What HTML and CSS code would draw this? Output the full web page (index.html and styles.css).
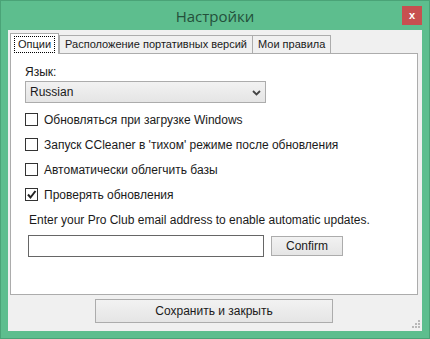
FILE: index.html
```html
<!DOCTYPE html>
<html lang="ru">
<head>
  <meta charset="UTF-8" />
  <title>Настройки</title>
  <link rel="stylesheet" href="styles.css">
</head>
<body>
  <div class="window">
    <div class="titlebar">
      <div class="title">Настройки</div>
      <button class="close" aria-label="Закрыть">x</button>
    </div>

    <div class="client">
      <div class="tabs">
        <div class="tab active"><span class="focus">Опции</span></div>
        <div class="tab">Расположение портативных версий</div>
        <div class="tab">Мои правила</div>
      </div>

      <div class="panel">
        <div class="label">Язык:</div>
        <div class="select">
          <span>Russian</span>
          <svg class="chevron" width="9" height="6" viewBox="0 0 9 6">
            <path d="M1 1 L4.5 4.5 L8 1" fill="none" stroke="#444" stroke-width="1.8" />
          </svg>
        </div>

        <div class="checks">
          <label class="check"><span class="box"></span>Обновляться при загрузке Windows</label>
          <label class="check"><span class="box"></span>Запуск CCleaner в 'тихом' режиме после обновления</label>
          <label class="check"><span class="box"></span>Автоматически облегчить базы</label>
          <label class="check">
            <span class="box">
              <svg width="11" height="11" viewBox="0 0 11 11">
                <path d="M2 5.5 L4.5 8.5 L9.5 2" fill="none" stroke="#222" stroke-width="2" />
              </svg>
            </span>Проверять обновления
          </label>
        </div>

        <div class="pro-text">Enter your Pro Club email address to enable automatic updates.</div>
        <div class="pro-row">
          <div class="input"></div>
          <button class="btn confirm">Confirm</button>
        </div>
      </div>

      <div class="footer">
        <button class="btn save">Сохранить и закрыть</button>
      </div>

      <svg class="grip" width="8" height="8" viewBox="0 0 8 8">
        <rect x="6" y="0" width="2" height="2" fill="#b8b8b8" />
        <rect x="3" y="3" width="2" height="2" fill="#b8b8b8" />
        <rect x="6" y="3" width="2" height="2" fill="#b8b8b8" />
        <rect x="0" y="6" width="2" height="2" fill="#b8b8b8" />
        <rect x="3" y="6" width="2" height="2" fill="#b8b8b8" />
        <rect x="6" y="6" width="2" height="2" fill="#b8b8b8" />
      </svg>
    </div>
  </div>
</body>
</html>
```

FILE: styles.css
```css
* {
  box-sizing: border-box;
}
body {
  margin: 0;
  font-family: "Liberation Sans", Arial, sans-serif;
  font-size: 12px;
  color: #1a1a1a;
}

/* окно */
.window {
  width: 430px;
  height: 339px;
  background: #5dbe8e;
  border: 1px solid #4aa377;
  padding: 0 7px 7px 7px;
  display: flex;
  flex-direction: column;
}

.titlebar {
  height: 29px;
  position: relative;
  display: flex;
  justify-content: center;
  align-items: center;
}
.title {
  font-family: "Open Sans", sans-serif;
  font-size: 15px;
  color: #24503b;
  margin-top: 1px;
}
.close {
  position: absolute;
  right: 0;
  top: 5px;
  width: 20px;
  height: 19px;
  border: none;
  background: #c75050;
  color: #fff;
  font: bold 11px "Liberation Sans", sans-serif;
  padding: 0 0 2px 0;
}

/* клиентская область */
.client {
  position: relative;
  flex: 1;
  background: #f0f0f0;
  padding: 3px 4px 0 2px;
  display: flex;
  flex-direction: column;
}

.tabs {
  display: flex;
  align-items: flex-end;
  height: 20px;
  font-size: 11px;
}
.tab {
  height: 18px;
  padding: 0 5px;
  border: 1px solid #acacac;
  border-bottom: none;
  background: #f0f0f0;
  line-height: 17px;
  white-space: nowrap;
  margin-left: -1px;
}
.tab:first-child {
  margin-left: 0;
}
.tab.active {
  height: 21px;
  margin-bottom: -1px;
  background: #fff;
  position: relative;
  z-index: 1;
  padding: 2px 3px 0 3px;
  line-height: 15px;
}
.tab.active + .tab {
  margin-left: 0;
}
.focus {
  display: inline-block;
  border: 1px dotted #000;
  padding: 0 3px;
}

.panel {
  height: 242px;
  background: #fff;
  border: 1px solid #acacac;
  padding: 10px 14px 0 14px;
}
.label {
  height: 16px;
  line-height: 16px;
}
.select {
  margin-top: 1px;
  width: 241px;
  height: 22px;
  border: 1px solid #acacac;
  background: linear-gradient(#f2f2f2, #e5e5e5);
  display: flex;
  align-items: center;
  justify-content: space-between;
  padding: 0 4px 0 4px;
}
.chevron {
  margin-top: 1px;
}

.checks {
  margin-top: 10px;
  display: flex;
  flex-direction: column;
  gap: 12px;
}
.check {
  display: flex;
  align-items: center;
  height: 13px;
}
.box {
  width: 13px;
  height: 13px;
  border: 1px solid #333;
  background: #fff;
  margin-right: 6px;
  display: flex;
  align-items: center;
  justify-content: center;
}

.pro-text {
  margin-top: 11px;
  padding-left: 4px;
  line-height: 16px;
}
.pro-row {
  margin-top: 7px;
  display: flex;
  align-items: center;
  padding-left: 3px;
}
.input {
  width: 236px;
  height: 22px;
  border: 1px solid #666;
  background: #fff;
}
.btn {
  font-family: "Liberation Sans", Arial, sans-serif;
  font-size: 12px;
  color: #1a1a1a;
  border: 1px solid #acacac;
  background: linear-gradient(#f2f2f2, #e5e5e5);
  padding: 0;
}
.confirm {
  width: 72px;
  height: 20px;
  margin-left: 7px;
}

.footer {
  display: flex;
  justify-content: center;
  padding-top: 4px;
}
.save {
  width: 238px;
  height: 24px;
}

.grip {
  position: absolute;
  right: 2px;
  bottom: 3px;
}
```
